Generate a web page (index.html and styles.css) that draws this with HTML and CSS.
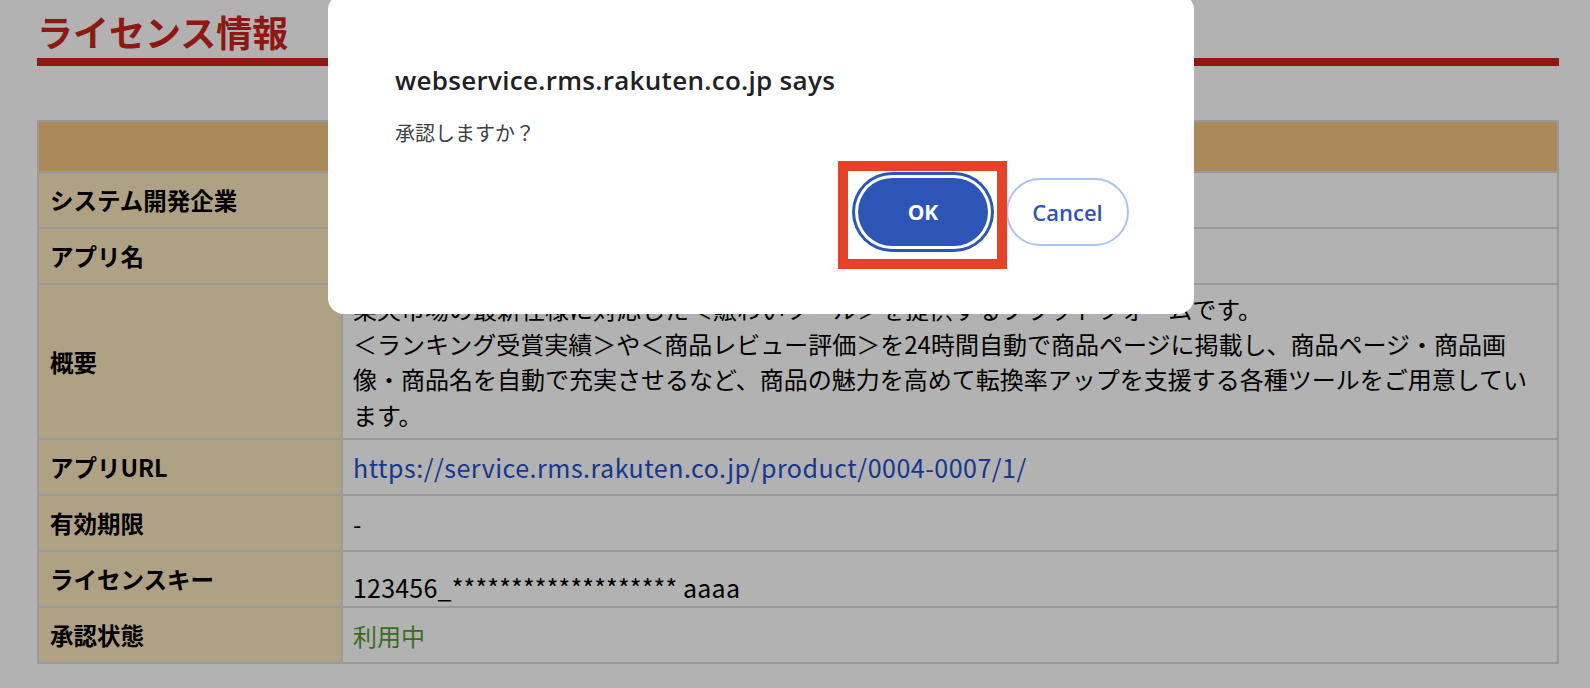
FILE: index.html
```html
<!DOCTYPE html>
<html lang="ja">
<head>
<meta charset="utf-8">
<title>ライセンス情報</title>
<link rel="stylesheet" href="styles.css">
</head>
<body>
<div class="page">
  <h1 class="title">ライセンス情報</h1>
  <div class="info">
    <div class="head"></div>
    <div class="label">システム開発企業</div><div class="value"></div>
    <div class="label">アプリ名</div><div class="value"></div>
    <div class="label">概要</div>
    <div class="value summary">楽天市場の最新仕様に対応した＜賑わいツール＞を提供するプラットフォームです。<br>＜ランキング受賞実績＞や＜商品レビュー評価＞を24時間自動で商品ページに掲載し、商品ページ・商品画<br>像・商品名を自動で充実させるなど、商品の魅力を高めて転換率アップを支援する各種ツールをご用意してい<br>ます。</div>
    <div class="label">アプリURL</div><div class="value"><a class="link" href="#">https://service.rms.rakuten.co.jp/product/0004-0007/1/</a></div>
    <div class="label">有効期限</div><div class="value">-</div>
    <div class="label">ライセンスキー</div><div class="value key">123456_******************* aaaa</div>
    <div class="label">承認状態</div><div class="value status">利用中</div>
  </div>
</div>
<div class="backdrop"></div>
<div class="dialog">
  <div class="dialog-title">webservice.rms.rakuten.co.jp says</div>
  <div class="dialog-msg">承認しますか？</div>
  <div class="dialog-buttons">
    <button class="btn btn-ok">OK</button>
    <button class="btn btn-cancel">Cancel</button>
  </div>
  <div class="mark"></div>
</div>
</body>
</html>
```
FILE: styles.css
```css
html, body {
  margin: 0;
  padding: 0;
  background: #ffffff;
}
body {
  font-family: "Noto Sans CJK JP", "Noto Sans", sans-serif;
  color: #000;
  width: 1590px;
  height: 688px;
  overflow: hidden;
}
.page {
  padding: 10px 31px 0 37px;
}
.title {
  margin: 0 0 54px;
  width: 1522px;
  font-size: 36px;
  line-height: 42px;
  font-weight: 700;
  color: #cc251a;
  padding-bottom: 6px;
  border-bottom: 8px solid #cc251a;
}
.info {
  width: 1522px;
  box-sizing: border-box;
  background: #dcdcdc;
  padding: 2px;
  display: grid;
  grid-template-columns: 302px 1fr;
  grid-template-rows: 49px 54px 54px 153px 54px 54px 54px 54px;
  gap: 2px;
}
.head {
  grid-column: 1 / 3;
  background: #f6c57e;
}
.label {
  background: #fbe7be;
  font-size: 23.5px;
  font-weight: 700;
  display: flex;
  align-items: center;
  padding-left: 11px;
}
.value {
  background: #ffffff;
  font-size: 24px;
  display: flex;
  align-items: center;
  padding-left: 10px;
  padding-right: 10px;
}
.summary {
  display: block;
  line-height: 35.2px;
  padding-top: 6px;
}
.link {
  color: #2150cc;
  text-decoration: none;
  font-size: 25px;
  letter-spacing: 0.5px;
}
.key {
  padding-top: 16px;
  box-sizing: border-box;
  font-size: 25px;
  letter-spacing: 0.2px;
}
.status {
  color: #539d2c;
}
.backdrop {
  position: fixed;
  inset: 0;
  background: rgba(0, 0, 0, 0.3);
}
.dialog {
  position: fixed;
  top: -6px;
  left: 328px;
  width: 866px;
  height: 320px;
  box-sizing: border-box;
  background: #ffffff;
  border-radius: 16px;
  padding: 68px 65px 0 67px;
  display: flex;
  flex-direction: column;
}
.dialog-title {
  font-family: "Open Sans", "Noto Sans", sans-serif;
  font-size: 26px;
  font-weight: 600;
  letter-spacing: 0.3px;
  line-height: 36px;
  color: #202124;
}
.dialog-msg {
  margin-top: 20px;
  font-family: "Noto Sans CJK JP", sans-serif;
  font-size: 20px;
  line-height: 30px;
  color: #3c4043;
}
.dialog-buttons {
  margin-top: 30px;
  display: flex;
  justify-content: flex-end;
  gap: 18px;
}
.btn {
  height: 68px;
  border-radius: 34px;
  font-family: "Open Sans", "Noto Sans", sans-serif;
  box-sizing: border-box;
  padding: 0;
  cursor: pointer;
}
.btn-ok {
  width: 130px;
  background: #2d54b7;
  color: #ffffff;
  border: none;
  font-size: 21px;
  font-weight: 700;
  box-shadow: 0 0 0 3px #ffffff, 0 0 0 6px #2d54b7;
}
.btn-cancel {
  width: 123px;
  background: #ffffff;
  color: #2d54b7;
  border: 2px solid #a8c4f4;
  font-size: 22px;
  font-weight: 600;
}
.mark {
  position: absolute;
  left: 510px;
  top: 167px;
  width: 169px;
  height: 108px;
  box-sizing: border-box;
  border: 10px solid #e8412a;
}
```
